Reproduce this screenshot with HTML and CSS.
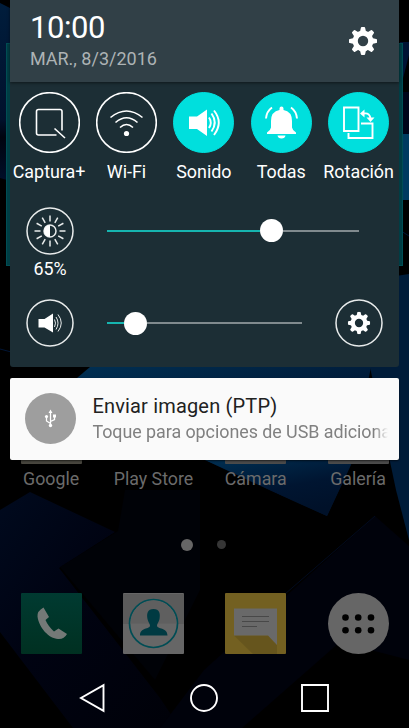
FILE: index.html
```
<!DOCTYPE html>
<html lang="es">
<head>
<meta charset="utf-8">
<title>Notificaciones</title>
<link rel="stylesheet" href="styles.css">
</head>
<body>
<svg width="0" height="0" class="defs">
  <defs>
    <symbol id="gear" viewBox="-14 -14 28 28">
      <g fill="#fff" stroke="none">
        <path fill-rule="evenodd" d="M0-10.4A10.4 10.4 0 1 1 0 10.4A10.4 10.4 0 1 1 0-10.4ZM0-5.2A5.2 5.2 0 1 0 0 5.2A5.2 5.2 0 1 0 0-5.2Z"/>
        <g id="teeth"><path id="tooth" d="M-3.1-9L-2.1-13.2Q-2-14-1.2-14H1.2Q2-14 2.1-13.2L3.1-9Z"/>
        <use href="#tooth" transform="rotate(45)"/><use href="#tooth" transform="rotate(90)"/><use href="#tooth" transform="rotate(135)"/></g>
        <use href="#teeth" transform="rotate(180)"/>
      </g>
    </symbol>
  </defs>
</svg>
<div class="phone">
  <svg class="wallpaper" viewBox="0 0 409 728">
    <defs>
      <linearGradient id="navy" x1="0" y1="0" x2="1" y2="1"><stop offset="0" stop-color="#000a1e"/><stop offset=".4" stop-color="#000312"/><stop offset="1" stop-color="#000108"/></linearGradient>
      <linearGradient id="left" x1="0" y1="0" x2="0" y2="1"><stop offset="0" stop-color="#001d3c"/><stop offset=".65" stop-color="#00112c"/><stop offset=".75" stop-color="#00040f"/><stop offset="1" stop-color="#000f2a"/></linearGradient>
      <linearGradient id="mid" x1="0" y1="0" x2=".5" y2="1"><stop offset="0" stop-color="#002f52"/><stop offset=".6" stop-color="#001531"/><stop offset="1" stop-color="#001129"/></linearGradient>
    </defs>
    <path fill="#000" d="M0 0H409V728H0Z"/>
    <path fill="url(#left)" d="M0 3L14 10V182L0 178Z"/>
    <path fill="#001334" d="M409 55L400 90V42H409Z"/>
    <path fill="#000419" d="M400 92H409V134H400Z"/>
    <path fill="#003b60" d="M400 134H409V200H400Z"/>
    <path fill="none" stroke="#001535" d="M398 229L409 236M0 349L60 365"/>
    <path fill="#001c39" d="M370 280L409 274V540L396 490L370 367Z"/>
    <path fill="url(#mid)" d="M90 367H185L371 367L351 465L327 516L210 464L77 378Z"/>
    <path fill="#000" d="M0 460H205L290 500L200 560H0Z"/>
    <path fill="url(#mid)" d="M205 460H353L327 516Z"/>
    <path fill="url(#navy)" d="M0 510L30 492L115 532L59 568L160 698L180 728H73L0 632Z"/>
    <path fill="#000207" d="M125 490H200V590L155 680L60 567L118 531Z"/>
    <path fill="#00020b" d="M375 516L409 546V728H160L204 670Z"/>
    <path fill="none" stroke="#000a1e" d="M375 516L285 594"/>
    <path fill="#000" d="M409 660L340 642L242 728H409Z"/>
  </svg>

  <main class="home">
    <div class="widget"></div>
    <div class="apps">
      <div class="app"><i class="tile-edge warm"></i><span>Google</span></div>
      <div class="app"><i class="tile-edge none"></i><span>Play Store</span></div>
      <div class="app"><i class="tile-edge"></i><span>Cámara</span></div>
      <div class="app"><i class="tile-edge"></i><span>Galería</span></div>
    </div>
    <div class="pages"><i class="page current"></i><i class="page"></i></div>
    <div class="dock">
      <svg viewBox="0 0 61 61"><defs><linearGradient id="green" x2="0" y2="1"><stop stop-color="#003a31"/><stop offset="1" stop-color="#003021"/></linearGradient></defs>
        <rect width="61" height="61" rx="1" fill="url(#green)"/>
        <path fill="#747977" d="M22.5 14.5Q16 18 16.500 23.500C18 35 28 45.500 37 46Q43 46.500 46 41L37.500 35.500L33 38.500Q27 33 24.500 27L28 24Z"/></svg>
      <svg viewBox="0 0 61 61"><rect width="61" height="61" rx="1" fill="#666"/><path fill="#5b5b5b" d="M0 1H61V31H0Z"/>
        <circle cx="30.500" cy="30.500" r="24" fill="#676767" stroke="#004d55" stroke-width="1.700"/>
        <path fill="#5f5f5f" d="M7.500 30.500A23 23 0 0 1 53.500 30.500Z"/>
        <path fill="#003a42" d="M30.500 16C24.500 16 23.500 20.500 24.500 26C25 29 27 31 27 32.500C27 36.500 17 34 17 42.500H44.500C44.500 34 34 36.500 34 32.500C34 31 36 29 36.500 26C37.500 20.500 36.500 16 30.500 16Z"/></svg>
      <svg viewBox="0 0 61 61"><rect width="61" height="61" rx="1" fill="#736021"/>
        <path fill="#66551d" d="M9 42.500H43L52 52V61H28Z"/>
        <path fill="#696969" d="M9 15.500H52V52L43 42.500H9Z"/>
        <path stroke="#484848" stroke-width="1.200" d="M17 23.500H44M17 28.500H44M17 33.500H32"/></svg>
      <svg viewBox="0 0 61 61"><circle cx="30.500" cy="30.500" r="30.500" fill="#666"/>
        <g fill="#000"><circle cx="17.500" cy="24.500" r="3.300"/><circle cx="30.200" cy="24.500" r="3.300"/><circle cx="43" cy="24.500" r="3.300"/><circle cx="17.500" cy="37.200" r="3.300"/><circle cx="30.200" cy="37.200" r="3.300"/><circle cx="43" cy="37.200" r="3.300"/></g></svg>
    </div>
    <nav class="nav">
      <svg viewBox="0 0 30 30"><path d="M25.500 2.200V27.800L3 15Z"/></svg>
      <svg viewBox="0 0 30 30"><circle cx="15" cy="15" r="13"/></svg>
      <svg viewBox="0 0 30 30"><path d="M2 2H28V28H2Z"/></svg>
    </nav>
  </main>

  <section class="shade">
    <header class="header">
      <div><div class="time">10:00</div><div class="date">MAR., 8/3/2016</div></div>
      <svg class="settings"><use href="#gear"/></svg>
    </header>
    <div class="panel">
      <div class="toggles">
        <div class="toggle"><svg viewBox="0 0 61 61"><circle cx="30.500" cy="30.500" r="29.800"/><path d="M37.500 43H19.500Q17.500 43 17.500 41V19.500Q17.500 17.500 19.500 17.500H41Q43 17.500 43 19.500V38.500M35.500 36.500L46 46"/></svg><span>Captura+</span></div>
        <div class="toggle"><svg viewBox="0 0 61 61"><circle cx="30.500" cy="30.500" r="29.800"/><path d="M14.500 25.500Q30.500 12.500 46.500 25.500M19.500 30.500Q30.500 21 41.500 30.500M24 35.500Q30.500 29.500 37 35.500"/><circle class="solid" cx="30.500" cy="41.500" r="2.600"/></svg><span>Wi-Fi</span></div>
        <div class="toggle on"><svg viewBox="0 0 61 61"><circle cx="30.500" cy="30.500" r="30"/><path class="solid" d="M16 24.500H24L34 17.500V44L24 37H16Z"/><path d="M36 25.500Q39.500 30.500 36 36M38.500 21.500Q45 30.500 38.500 39.500M41 18.500Q50.500 30.500 41 43"/></svg><span>Sonido</span></div>
        <div class="toggle on"><svg viewBox="0 0 61 61"><circle cx="30.500" cy="30.500" r="30"/><path class="solid" d="M28.500 18V16.500A2 2 0 0 1 32.500 16.500V18Q41 19.500 41 29V35.500Q41.500 38.500 45 40.500V42H16V40.500Q19.500 38.500 20 35.500V29Q20 19.500 28.500 18ZM26.500 43.500H34.500Q34 46.500 30.500 46.500T26.500 43.500Z"/><path d="M21 15.500Q15.500 19.500 15 26.500M40 15.500Q45.500 19.500 46 26.500"/></svg><span>Todas</span></div>
        <div class="toggle on"><svg viewBox="0 0 61 61"><circle cx="30.500" cy="30.500" r="30"/><path d="M16 15.500H30.500V39H16ZM33 31.500H44.500V46H20.500V41M36 21.500Q42 20.500 42.500 27"/><path class="solid" d="M36.500 17.500V25.500L32 21.500ZM38.500 25.500H46.500L42.500 30Z"/></svg><span>Rotación</span></div>
      </div>
      <div class="control">
        <div class="knob"><svg viewBox="0 0 48 48"><circle cx="24" cy="24" r="23"/><circle cx="24" cy="24" r="6"/><path class="solid" d="M24 18A6 6 0 0 0 24 30Z"/><path d="M24 8.500V14.500M24 33.500V39.500M8.500 24H14.500M33.500 24H39.500M16.250 10.600L19.200 15.800M28.800 32.200L31.750 37.400M31.750 10.600L28.800 15.800M19.200 32.200L16.250 37.400M10.600 16.250L15.800 19.200M32.200 28.800L37.400 31.750M37.400 16.250L32.200 19.200M15.800 28.800L10.600 31.750"/></svg><span>65%</span></div>
        <div class="slider bright"><i class="fill"></i><i class="thumb"></i><i class="rest"></i></div>
      </div>
      <div class="control volume">
        <div class="knob"><svg viewBox="0 0 48 48"><circle cx="24" cy="24" r="23"/><path class="solid" d="M12.500 20H18.500L27 14.500V33.500L18.500 28.500H12.500Z"/><path class="thin" d="M28.500 20.500Q30.500 24 28.500 28M30 18Q34 24 30 30.500M32 15.500Q38.500 24 32 32.500"/></svg></div>
        <div class="slider sound"><i class="fill"></i><i class="thumb"></i><i class="rest"></i></div>
        <div class="knob"><svg viewBox="0 0 48 48"><circle cx="24" cy="24" r="23"/><use href="#gear" x="12.800" y="12.800" width="22.400" height="22.400"/></svg></div>
      </div>
    </div>
    <article class="notification">
      <svg viewBox="0 0 51 51"><circle cx="25.500" cy="25.500" r="25.500" fill="#9e9e9e"/><path d="M25.500 19V33M25.500 30.500L21.500 28V23.500M25.500 28.500L29.500 26.500V22.500" fill="none" stroke="#fff" stroke-width="1.300"/><path fill="#fff" d="M23.500 20L25.500 16.500L27.500 20ZM28 21.500H31V24.500H28Z"/><circle cx="21.500" cy="23.500" r="1.600" fill="#fff"/><circle cx="25.500" cy="32.500" r="1.700" fill="#fff"/></svg>
      <div class="copy"><div class="title">Enviar imagen (PTP)</div><div class="detail">Toque para opciones de USB adiciona</div></div>
    </article>
  </section>
</div>
</body>
</html>
```
FILE: styles.css
```
* { box-sizing: border-box; }
body { margin: 0; background: #000; font-family: Roboto, sans-serif; }
.defs { position: absolute; }
svg { display: block; flex: none; }
.phone { display: grid; width: 409px; height: 728px; overflow: hidden; }
.wallpaper, .home, .shade { grid-area: 1 / 1; min-width: 0; }
.wallpaper { width: 409px; height: 728px; }

.home { display: flex; flex-direction: column; padding-top: 43px; color: #6b6b6b; }
.widget { height: 223px; margin: 0 6px; background: #003d44; border: 1px solid #004e54; }
.apps { display: grid; grid-template-columns: repeat(4, 102.3px); margin-top: 190px; }
.app { display: flex; flex-direction: column; align-items: center; font-size: 17.800px; line-height: 22px; gap: 4px; white-space: nowrap; }
.tile-edge { width: 61px; height: 8px; background: #4b4b4b; border-radius: 0 0 1px 1px; }
.warm { background: #48463e; }
.none { background: none; }
.pages { display: flex; align-items: center; justify-content: center; gap: 24px; height: 14px; margin-top: 47.500px; padding-right: 2px; }
.page { width: 9px; height: 9px; border-radius: 50%; background: #363636; }
.current { width: 12px; height: 12px; background: #666; }
.dock { display: grid; grid-template-columns: repeat(4, 102.3px); justify-items: center; margin-top: 41px; }
.dock svg { width: 61px; height: 61px; }
.nav { display: flex; justify-content: space-between; padding: 0 79px 0 77.500px; margin-top: 29px; }
.nav svg { width: 30px; height: 30px; fill: none; stroke: #fff; stroke-width: 1.9; }

.shade { padding: 0 10px 0 10.400px; color: #fff; }
.header { position: relative; display: flex; justify-content: space-between; align-items: center; height: 82px; padding: 0 22px 0 19.500px; background: #314047; box-shadow: 0 1px 3px rgba(0, 0, 0, .5); }
.time { font-size: 31px; line-height: 34px; letter-spacing: -.4px; }
.date { font-size: 18px; line-height: 24px; margin-top: 2px; color: #adb3b5; }
.settings { width: 28px; height: 28px; }
.panel { height: 285px; padding-top: 10px; background: #1c2e35; border-radius: 0 0 3px 3px; }
.toggles { display: grid; grid-template-columns: repeat(5, 77.4px); }
.toggle { display: flex; flex-direction: column; align-items: center; gap: 7.500px; font-size: 17.900px; line-height: 22px; min-width: 0; white-space: nowrap; }
.toggle svg { width: 61px; height: 61px; fill: none; stroke: #fff; stroke-width: 1.6; }
.toggle .solid, .knob .solid { fill: #fff; stroke: none; }
.on circle { fill: #00dfdd; stroke: #00dfdd; stroke-width: 1; }
.on path { stroke-width: 1.9; }
.control { display: flex; margin-top: 24px; padding-left: 15.600px; }
.knob { display: flex; flex-direction: column; align-items: center; width: 48px; font-size: 17.900px; line-height: 22px; gap: 3.500px; }
.knob > svg { width: 48px; height: 48px; fill: none; stroke: #e8ebeb; stroke-width: 1.5; }
.knob .thin { stroke-width: 1; }
.slider { display: flex; align-items: center; height: 48px; margin-left: 33px; }
.fill { height: 2px; background: #16b5b0; }
.rest { flex: 1; height: 2px; background: #808a8e; }
.thumb { width: 23px; height: 23px; border-radius: 50%; background: #fff; }
.bright { width: 252px; }
.bright .fill { width: 153.500px; }
.volume { margin-top: 19px; }
.sound { width: 195px; margin-right: 33px; }
.sound .fill { width: 17px; }
.notification { display: flex; align-items: center; gap: 16px; height: 82px; margin-top: 10.500px; padding: 0 11px 0 15px; background: #fafafa; border-radius: 2px; box-shadow: 0 1px 2px rgba(0, 0, 0, .6); }
.notification svg { width: 51px; height: 51px; }
.copy { flex: 1; min-width: 0; overflow: hidden; white-space: nowrap; }
.title { font-size: 20px; line-height: 26px; letter-spacing: .17px; color: #212121; }
.detail { font-size: 17.900px; line-height: 26px; letter-spacing: -.05px; color: #808080; mask-image: linear-gradient(to right, #000 calc(100% - 14px), transparent); }
```
